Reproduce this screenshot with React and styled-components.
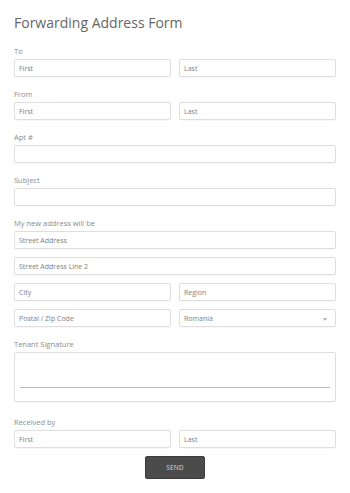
import React from "react";
import styled, { createGlobalStyle } from "styled-components";

const Global = createGlobalStyle`
  html, body {
    margin: 0;
    padding: 0;
    background: #ffffff;
  }
  body {
    font-family: "Open Sans", "Noto Sans", sans-serif;
  }
  * { box-sizing: border-box; }
`;

export default function App() {
  return (
    <>
      <Global />
      <Form onSubmit={(e) => e.preventDefault()}>
        <Title>Forwarding Address Form</Title>

        <Field>
          <Label>To</Label>
          <Row>
            <Input placeholder="First" />
            <Input placeholder="Last" />
          </Row>
        </Field>

        <Field>
          <Label>From</Label>
          <Row>
            <Input placeholder="First" />
            <Input placeholder="Last" />
          </Row>
        </Field>

        <Field>
          <Label>Apt #</Label>
          <Input />
        </Field>

        <Field>
          <Label>Subject</Label>
          <Input />
        </Field>

        <Field>
          <Label>My new address will be</Label>
          <Stack>
            <Input placeholder="Street Address" />
            <Input placeholder="Street Address Line 2" />
            <Row>
              <Input placeholder="City" />
              <Input placeholder="Region" />
            </Row>
            <Row>
              <Input placeholder="Postal / Zip Code" />
              <Select>
                Romania
                <Caret />
              </Select>
            </Row>
          </Stack>
        </Field>

        <Field $gap="14px">
          <Label>Tenant Signature</Label>
          <SignatureBox>
            <SignLine />
          </SignatureBox>
        </Field>

        <Field $gap="8px">
          <Label>Received by</Label>
          <Row>
            <Input placeholder="First" />
            <Input placeholder="Last" />
          </Row>
        </Field>

        <Actions>
          <SendButton type="submit">SEND</SendButton>
        </Actions>
      </Form>
    </>
  );
}

const Form = styled.form`
  width: 350px;
  padding: 13px 14px 20px 14px;
  display: flex;
  flex-direction: column;
`;

const Title = styled.h1`
  margin: 0 0 12px 0;
  font-size: 14px;
  line-height: 20px;
  font-weight: 400;
  color: #666666;
`;

const Field = styled.div`
  display: flex;
  flex-direction: column;
  margin-bottom: ${(p) => p.$gap || "11px"};
`;

const Label = styled.label`
  font-size: 7.5px;
  line-height: 12px;
  color: #8c8c8c;
  margin-bottom: 2px;
`;

const Row = styled.div`
  display: grid;
  grid-template-columns: 1fr 1fr;
  column-gap: 8px;
`;

const Stack = styled.div`
  display: flex;
  flex-direction: column;
  gap: 8px;
`;

const Input = styled.input`
  width: 100%;
  height: 18px;
  margin: 0;
  padding: 0 4px;
  border: 1px solid #dedede;
  border-radius: 2px;
  box-shadow: 0 1px 1px rgba(0, 0, 0, 0.03);
  background: #ffffff;
  font-family: "Open Sans", "Noto Sans", sans-serif;
  font-size: 7px;
  color: #666666;
  outline: none;
  &::placeholder {
    color: #808080;
    opacity: 1;
  }
`;

const Select = styled.div`
  position: relative;
  height: 18px;
  padding: 0 4px;
  display: flex;
  align-items: center;
  border: 1px solid #dedede;
  border-radius: 2px;
  box-shadow: 0 1px 1px rgba(0, 0, 0, 0.03);
  font-size: 7px;
  color: #808080;
`;

const Caret = styled.span`
  position: absolute;
  right: 8px;
  top: 8px;
  width: 0;
  height: 0;
  border-left: 2.5px solid transparent;
  border-right: 2.5px solid transparent;
  border-top: 3px solid #b0b0b0;
`;

const SignatureBox = styled.div`
  height: 50px;
  border: 1px solid #dedede;
  border-radius: 2px;
  box-shadow: 0 1px 1px rgba(0, 0, 0, 0.03);
  display: flex;
  align-items: flex-end;
  padding: 0 5px 13px 5px;
`;

const SignLine = styled.div`
  flex: 1;
  height: 1px;
  background: #b8b8b8;
`;

const Actions = styled.div`
  display: flex;
  justify-content: center;
`;

const SendButton = styled.button`
  width: 60px;
  height: 23px;
  background: #4b4b4b;
  border: 1px solid #3c3c3c;
  border-radius: 2px;
  color: #d8d8d8;
  font-family: "Open Sans", "Noto Sans", sans-serif;
  font-size: 6.5px;
  letter-spacing: 0.2px;
  cursor: pointer;
`;
